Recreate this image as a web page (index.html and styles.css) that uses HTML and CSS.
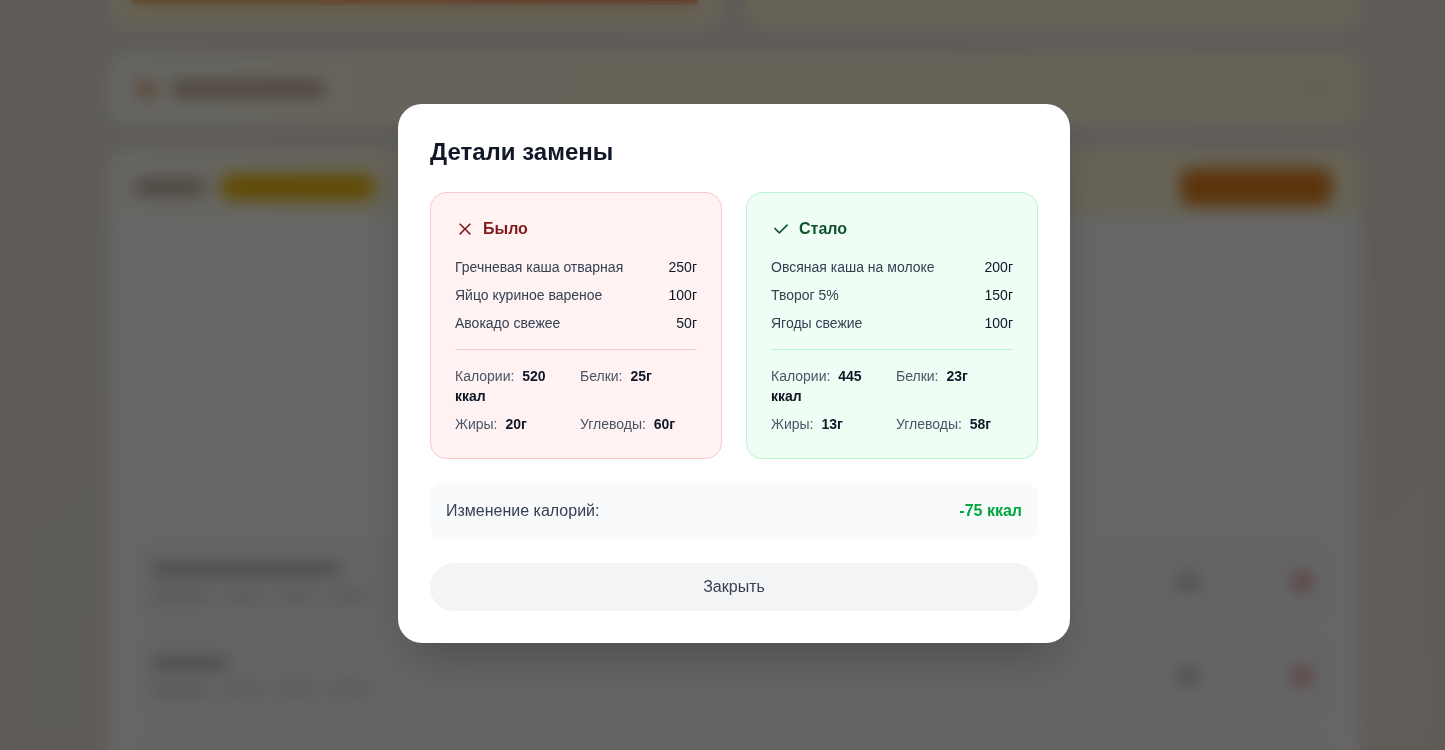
FILE: index.html
```html
<!DOCTYPE html>
<html lang="ru">

<head>
    <meta charset="UTF-8">
    <meta name="viewport" content="width=device-width, initial-scale=1.0">
    <title>Детали замены</title>
    <link rel="stylesheet" href="styles.css">
</head>

<body>
    <!-- страница под модальным окном -->
    <div class="page" aria-hidden="true">
        <div class="top">
            <div class="card top_card">
                <div class="progress"></div>
            </div>
            <div class="card top_card"></div>
        </div>
        <div class="card section">
            <span class="dot"></span>
            <span class="bar bar_name"></span>
            <span class="arrow"></span>
        </div>
        <div class="meal">
            <div class="card meal_head">
                <span class="bar bar_meal"></span>
                <span class="badge"></span>
                <span class="add"></span>
            </div>
            <div class="meal_list">
                <div class="item">
                    <div class="item_info">
                        <span class="bar bar_title"></span>
                        <div class="item_sub"><i></i><i></i><i></i><i></i></div>
                    </div>
                    <span class="weight"></span>
                    <span class="remove"></span>
                </div>
                <div class="item">
                    <div class="item_info">
                        <span class="bar bar_title short"></span>
                        <div class="item_sub"><i></i><i></i><i></i><i></i></div>
                    </div>
                    <span class="weight"></span>
                    <span class="remove"></span>
                </div>
                <div class="item">
                    <div class="item_info">
                        <span class="bar bar_title medium"></span>
                        <div class="item_sub"><i></i><i></i><i></i><i></i></div>
                    </div>
                    <span class="weight"></span>
                    <span class="remove"></span>
                </div>
            </div>
        </div>
    </div>

    <div class="overlay">
        <div class="modal" role="dialog" aria-modal="true" aria-labelledby="modal_title">
            <h2 id="modal_title">Детали замены</h2>

            <div class="compare">
                <section class="box before">
                    <h3>
                        <svg viewBox="0 0 24 24" aria-hidden="true"><path d="M12 10.7l5.75-5.75 1.3 1.3L13.3 12l5.75 5.75-1.3 1.3L12 13.3l-5.75 5.75-1.3-1.3L10.7 12 4.95 6.25l1.3-1.3z"/></svg>
                        Было
                    </h3>
                    <ul class="foods">
                        <li><span>Гречневая каша отварная</span><b>250г</b></li>
                        <li><span>Яйцо куриное вареное</span><b>100г</b></li>
                        <li><span>Авокадо свежее</span><b>50г</b></li>
                    </ul>
                    <div class="totals">
                        <div>Калории: <strong>520 ккал</strong></div>
                        <div>Белки: <strong>25г</strong></div>
                        <div>Жиры: <strong>20г</strong></div>
                        <div>Углеводы: <strong>60г</strong></div>
                    </div>
                </section>

                <section class="box after">
                    <h3>
                        <svg viewBox="0 0 24 24" aria-hidden="true"><path d="M10 15.17l9.19-9.19 1.42 1.41L10 18l-6.36-6.36 1.41-1.42z"/></svg>
                        Стало
                    </h3>
                    <ul class="foods">
                        <li><span>Овсяная каша на молоке</span><b>200г</b></li>
                        <li><span>Творог 5%</span><b>150г</b></li>
                        <li><span>Ягоды свежие</span><b>100г</b></li>
                    </ul>
                    <div class="totals">
                        <div>Калории: <strong>445 ккал</strong></div>
                        <div>Белки: <strong>23г</strong></div>
                        <div>Жиры: <strong>13г</strong></div>
                        <div>Углеводы: <strong>58г</strong></div>
                    </div>
                </section>
            </div>

            <div class="diff">
                <span>Изменение калорий:</span>
                <strong>-75 ккал</strong>
            </div>

            <button type="button" class="close">Закрыть</button>
        </div>
    </div>
</body>

</html>
```
FILE: styles.css
```css
* {
    box-sizing: border-box;
    margin: 0;
    padding: 0;
}

body {
    font: 16px/24px "Liberation Sans", Arial, sans-serif;
    color: #101828;
    background: linear-gradient(135deg, #eae4dc, #efe5dc);
}

/* страница */
.page {
    height: 100vh;
    padding: 0 85px 0 108px;
    overflow: hidden;
}

.card {
    background: linear-gradient(90deg, #fffef8, #fffbe2 20%, #fff8d6);
}

.top {
    display: grid;
    grid-template-columns: 1fr 1fr;
    gap: 24px;
}

.top_card {
    height: 29px;
    padding: 0 24px;
    background: #fdf8d8;
    border-radius: 0 0 16px 16px;
}

.progress {
    height: 5px;
    background: linear-gradient(90deg, #f5a95f, #f58a58);
}

.section {
    display: flex;
    align-items: center;
    height: 72px;
    margin: 24px 0;
    padding: 0 36px 0 28px;
    border-radius: 16px;
}

.bar {
    height: 12px;
    border-radius: 4px;
}

.dot {
    width: 20px;
    height: 20px;
    margin-right: 16px;
    border-radius: 50%;
    background: #e2b088;
}

.bar_name {
    width: 152px;
    height: 16px;
    background: #c0aa94;
}

.arrow {
    width: 12px;
    height: 8px;
    margin-left: auto;
    background: #e2dcc0;
}

.meal {
    background: #fff;
    border-radius: 16px 16px 0 0;
}

.meal_head {
    display: flex;
    align-items: center;
    height: 68px;
    padding: 8px 28px 0;
    border-radius: 16px 16px 0 0;
}

.bar_meal {
    width: 68px;
    height: 16px;
    margin-right: 16px;
    background: #c0aa9a;
}

.badge {
    width: 156px;
    height: 26px;
    border-radius: 13px;
    background: #f0bc0c;
}

.add {
    width: 152px;
    height: 38px;
    margin-left: auto;
    border-radius: 12px;
    background: #e68324;
}

.meal_list {
    display: grid;
    gap: 12px;
    padding: 324px 28px 0;
}

.item {
    display: flex;
    align-items: center;
    height: 82px;
    padding: 0 20px 0 16px;
    border-radius: 12px;
    background: #fbfbfb;
}

.item_info {
    display: grid;
    gap: 16px;
    flex: 1;
}

.bar_title {
    width: 188px;
    background: #b4b6ba;
}

.bar_title.short {
    width: 76px;
}

.bar_title.medium {
    width: 104px;
}

.item_sub {
    display: flex;
    gap: 14px;
}

.item_sub i {
    width: 40px;
    height: 10px;
    background: #dcdee0;
}

.item_sub i:first-child {
    width: 56px;
    background: #d2d4d8;
}

.weight {
    width: 24px;
    height: 14px;
    margin-right: 92px;
    background: #c4c4c4;
}

.remove {
    width: 20px;
    height: 20px;
    border-radius: 50%;
    background: #e0a09c;
}

/* модальное окно */
.overlay {
    position: fixed;
    inset: 0;
    display: flex;
    align-items: center;
    justify-content: center;
    padding: 16px 16px 19px 39px;
    background: rgba(0, 0, 0, 0.6);
    backdrop-filter: blur(8px);
}

.modal {
    width: 100%;
    max-width: 672px;
    padding: 32px;
    border-radius: 24px;
    background: #fff;
    box-shadow: 0 25px 50px -12px rgba(0, 0, 0, 0.25);
}

h2 {
    margin-bottom: 24px;
    font-size: 24px;
    line-height: 32px;
}

.compare {
    display: grid;
    grid-template-columns: 1fr 1fr;
    gap: 24px;
}

.box {
    padding: 24px;
    border: 1px solid;
    border-radius: 16px;
}

.before {
    background: #fef2f2;
}

.after {
    background: #f0fdf4;
}

.before,
.before .totals {
    border-color: #f9cace;
}

.after,
.after .totals {
    border-color: #b9f3d2;
}

h3 {
    display: flex;
    align-items: center;
    gap: 8px;
    margin-bottom: 16px;
    font-size: 16px;
}

h3 svg {
    width: 20px;
    height: 20px;
    fill: currentColor;
}

.before h3 {
    color: #82181a;
}

.after h3 {
    color: #0d542b;
}

.foods {
    display: grid;
    gap: 8px;
    list-style: none;
    font-size: 14px;
    line-height: 20px;
}

.foods li {
    display: flex;
    justify-content: space-between;
    color: #364153;
}

.foods b {
    font-weight: normal;
    color: #101828;
}

.totals {
    display: grid;
    grid-template-columns: 1fr 1fr;
    gap: 8px;
    margin-top: 16px;
    padding-top: 16px;
    border-top: 1px solid;
    font-size: 14px;
    line-height: 20px;
    color: #4a5565;
}

.totals strong {
    margin-left: 4px;
    color: #101828;
}

.diff {
    display: flex;
    justify-content: space-between;
    margin: 24px 0;
    padding: 16px;
    border-radius: 12px;
    background: #f9fafb;
    color: #364153;
}

.diff strong {
    color: #00a63e;
}

.close {
    display: block;
    width: 100%;
    padding: 12px;
    border: none;
    border-radius: 24px;
    background: #f3f4f6;
    color: #364153;
    font: inherit;
    cursor: pointer;
}
```
